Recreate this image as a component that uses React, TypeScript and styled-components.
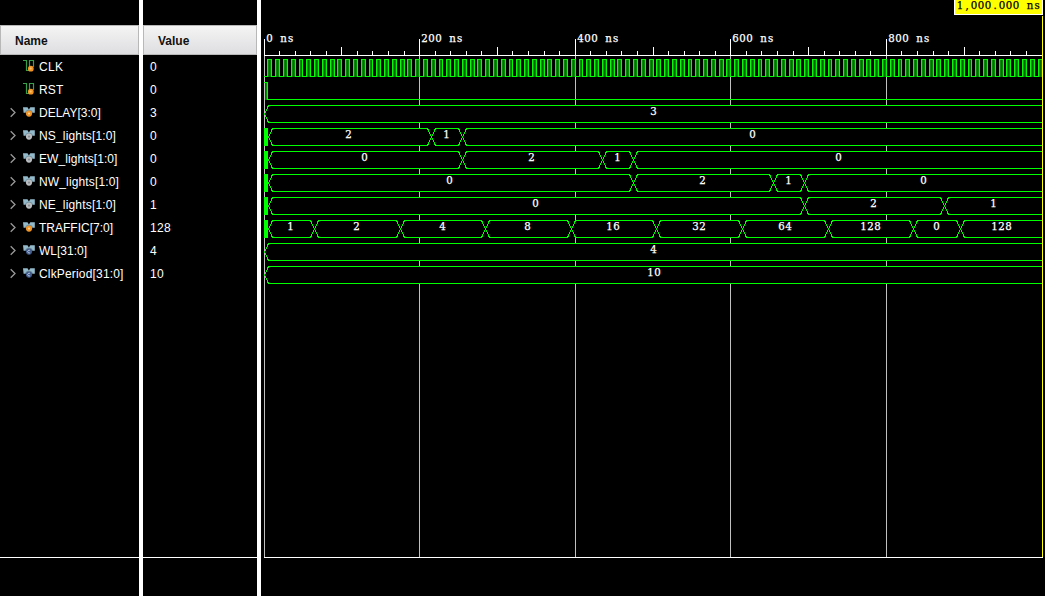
import React from "react";
import styled, { createGlobalStyle } from "styled-components";

const GlobalStyle = createGlobalStyle`
  html, body { margin: 0; background: #000; overflow: hidden; }
  * { box-sizing: border-box; }
`;

const Viewer = styled.div`
  display: flex;
  width: 1046px;
  height: 596px;
  background: #000;
  font-family: "Liberation Sans", Arial, sans-serif;
  font-size: 12px;
  color: #fff;
`;

const Column = styled.div<{ $width: number }>`
  display: flex;
  flex-direction: column;
  flex: none;
  width: ${(p) => p.$width}px;
  padding-top: 25px;
`;

const Divider = styled.div<{ $width: number }>`
  flex: none;
  width: ${(p) => p.$width}px;
  background: #fff;
`;

const ColumnHeader = styled.div`
  height: 30px;
  padding: 1px 0 0 14px;
  line-height: 28px;
  font-weight: bold;
  color: #111;
  border: 1px solid #b8b8b8;
  background: linear-gradient(#f4f4f4, #dedee1);
`;

const Rows = styled.div`
  height: 503px;
  border-bottom: 1px solid #fff;
`;

const NameRow = styled.div`
  display: flex;
  align-items: center;
  height: 23px;
  white-space: nowrap;
`;

const ValueRow = styled(NameRow)`
  padding-left: 7px;
`;

const Label = styled.span<{ $spacing?: number }>`
  height: 23px;
  line-height: 25px;
  letter-spacing: ${(p) => p.$spacing ?? 0}px;
`;

const Arrow = styled.svg`
  flex: none;
  width: 12px;
  height: 23px;
  margin-left: 8px;
  margin-right: 2px;
`;

const Glyph = styled.svg`
  flex: none;
  width: 17px;
  height: 23px;
`;

const WaveArea = styled.svg`
  flex: none;
  display: block;
  width: 784px;
  height: 596px;
  shape-rendering: crispEdges;
`;

const WaveText = styled.text`
  font-family: "DejaVu Serif", serif;
  font-size: 10.2px;
  text-anchor: middle;
  stroke-width: 0.25px;
  shape-rendering: auto;
`;

type Kind = "bit" | "bus";
type Signal = {
  name: string;
  value: string;
  kind: Kind;
  ball: string;
  spacing?: number;
  mark?: boolean;
  start?: number;
  edges?: number[];
  labels?: [string, number][];
};

const ORANGE = "#f09426";
const GREY = "#b9bdc0";
const NAVY = "#405989";
const GREEN = "#00ff00";

const signals: Signal[] = [
  { name: "CLK", value: "0", kind: "bit", ball: ORANGE, spacing: 0.3 },
  { name: "RST", value: "0", kind: "bit", ball: ORANGE, spacing: 0.15 },
  { name: "DELAY[3:0]", value: "3", kind: "bus", ball: ORANGE, start: 264, edges: [], labels: [["3", 653.5]] },
  { name: "NS_lights[1:0]", value: "0", kind: "bus", ball: GREY, spacing: 0.17, start: 268, edges: [431, 462], labels: [["2", 348.5], ["1", 446.5], ["0", 752.5]] },
  { name: "EW_lights[1:0]", value: "0", kind: "bus", ball: GREY, spacing: 0.08, start: 268, edges: [462, 602, 633], labels: [["0", 364.5], ["2", 531.5], ["1", 617.5], ["0", 838.5]] },
  { name: "NW_lights[1:0]", value: "0", kind: "bus", ball: GREY, spacing: 0.14, start: 268, edges: [633, 773, 804], labels: [["0", 449.5], ["2", 702.5], ["1", 788.5], ["0", 923.5]] },
  { name: "NE_lights[1:0]", value: "1", kind: "bus", ball: GREY, spacing: 0.17, start: 268, edges: [804, 944], labels: [["0", 535.5], ["2", 873.5], ["1", 993.5]] },
  {
    name: "TRAFFIC[7:0]", value: "128", kind: "bus", ball: ORANGE, start: 268,
    edges: [314, 400, 485, 571, 656, 742, 828, 913, 960],
    labels: [["1", 290.5], ["2", 356.5], ["4", 442.5], ["8", 527.5], ["16", 613], ["32", 699], ["64", 785], ["128", 870.5], ["0", 936.5], ["128", 1001.5]],
  },
  { name: "WL[31:0]", value: "4", kind: "bus", ball: NAVY, mark: true, start: 264, edges: [], labels: [["4", 653.5]] },
  { name: "ClkPeriod[31:0]", value: "10", kind: "bus", ball: NAVY, mark: true, spacing: 0.17, start: 264, edges: [], labels: [["10", 654]] },
];

const PX_PER_NS = 0.778;
const toX = (ns: number) => Math.floor(264 + ns * PX_PER_NS + 0.001);

const HLine = ({ from, to, y }: { from: number; to: number; y: number }) => (
  <rect x={from} y={y} width={to - from} height={1} fill={GREEN} />
);
const VLine = ({ x, y, h }: { x: number; y: number; h: number }) => (
  <rect x={x} y={y} width={1} height={h} fill={GREEN} />
);

/* Text set on a fixed 7px character grid, centred on cx. */
function GridText({ text, cx, y, fill = "#fff" }: { text: string; cx: number; y: number; fill?: string }) {
  const first = cx - ((text.length - 1) * 7) / 2;
  const xs = Array.from(text, (_, i) => first + i * 7).join(" ");
  return <WaveText x={xs} y={y} fill={fill} stroke={fill}>{text}</WaveText>;
}

function SignalIcon({ kind, ball, mark }: { kind: Kind; ball: string; mark?: boolean }) {
  if (kind === "bit") {
    return (
      <Glyph viewBox="0 0 17 23">
        <path d="M1 5.5h3.5v10H8M7.5 12V5.5h4V12" fill="none" stroke="#36a04b" strokeWidth="1.2" />
        <circle cx="8.8" cy="13.7" r="2.9" fill={ball} />
        <circle cx="8.6" cy="13.5" r="1.1" fill="#ffc470" />
      </Glyph>
    );
  }
  return (
    <Glyph viewBox="0 0 17 23">
      <path d="M1 6.3h4.5l1.4 2.2 1.4-2.2h4.5v5.5H1.6z" fill="#93bacb" />
      <circle cx="7" cy="12.6" r="3.9" fill="#000" fillOpacity="0.25" />
      <circle cx="7" cy="12.6" r="3.1" fill={ball} />
      {mark ? (
        <path d="M8.1 11.6a1.4 1.4 0 1 0 0 2" fill="none" stroke="#c2d0e8" strokeWidth="0.9" />
      ) : (
        <circle cx="7" cy="12.6" r="1.1" fill={ball === GREY ? "#888c90" : "#ffd090"} />
      )}
    </Glyph>
  );
}

function Ruler() {
  const majors = [0, 200, 400, 600, 800];
  return (
    <g>
      {majors.map((ns) => (
        <rect key={ns} x={toX(ns)} y={56} width={1} height={501} fill="#c0c0c0" />
      ))}
      <rect x={264} y={55} width={778} height={1} fill="#fff" />
      <rect x={264} y={557} width={779} height={1} fill="#fff" />
      {Array.from({ length: 50 }, (_, i) => {
        const ns = i * 20;
        const y = ns % 200 === 0 ? 39 : ns % 100 === 0 ? 47 : 51;
        return <rect key={ns} x={toX(ns)} y={y} width={1} height={55 - y} fill="#fff" />;
      })}
      {majors.map((ns) => {
        const s = `${ns} ns`;
        return <GridText key={ns} text={s} cx={toX(ns) + 2 + (s.length * 7) / 2} y={42} />;
      })}
    </g>
  );
}

function Clock() {
  return (
    <g>
      {Array.from({ length: 100 }, (_, i) => {
        const low = toX(i * 10);
        const a = toX(i * 10 + 5);
        const b = toX(i * 10 + 10);
        return (
          <g key={i}>
            <rect x={a + 1} y={60} width={b - a - 1} height={17} fill="#009000" />
            <rect x={a + 2} y={60} width={1} height={17} fill="#005c00" />
            <HLine from={low} to={a + 1} y={76} />
            <HLine from={a} to={b + 1} y={59} />
            <VLine x={a} y={59} h={18} />
            <VLine x={b} y={59} h={18} />
          </g>
        );
      })}
    </g>
  );
}

function Reset() {
  return (
    <g>
      <rect x={265} y={83} width={1} height={17} fill="#005c00" />
      <rect x={266} y={83} width={1} height={17} fill="#009000" />
      <HLine from={264} to={268} y={82} />
      <VLine x={267} y={82} h={18} />
      <HLine from={267} to={1042} y={99} />
    </g>
  );
}

function Bus({ s, row }: { s: Signal; row: number }) {
  const top = 59 + row * 23;
  const bot = top + 17;
  const mid = top + 9;
  const start = s.start!;
  const edges = s.edges!;
  const stops = [start, ...edges];
  const slants = [
    `M${start + 0.5} ${mid}L${start + 4.5} ${top + 0.5}M${start + 0.5} ${mid}L${start + 4.5} ${bot + 0.5}`,
    ...edges.map((e) => `M${e - 3.5} ${top + 0.5}L${e + 4.5} ${bot + 0.5}M${e - 3.5} ${bot + 0.5}L${e + 4.5} ${top + 0.5}`),
  ].join("");
  return (
    <g>
      <path d={`M${start} ${mid}L${start + 4} ${top}H1042V${bot + 1}H${start + 4}Z`} fill="#000" />
      {start === 268 && <rect x={264} y={top} width={4} height={18} fill={GREEN} />}
      <path d={slants} fill="none" stroke={GREEN} />
      {stops.map((from, i) => {
        const to = i < edges.length ? edges[i] - 3 : 1042;
        return (
          <g key={from}>
            <HLine from={from + 4} to={to} y={top} />
            <HLine from={from + 4} to={to} y={bot} />
          </g>
        );
      })}
      {s.labels!.map(([t, x]) => (
        <GridText key={x} text={t} cx={x} y={top + 10} />
      ))}
    </g>
  );
}

export default function App() {
  return (
    <>
      <GlobalStyle />
      <Viewer>
        <Column $width={139}>
          <ColumnHeader>Name</ColumnHeader>
          <Rows>
            {signals.map((s) => (
              <NameRow key={s.name}>
                <Arrow viewBox="0 0 12 23">
                  {s.kind === "bus" && <path d="M2.7 7.2L7 11.5L2.7 15.8" fill="none" stroke="#999" strokeWidth="1.3" />}
                </Arrow>
                <SignalIcon kind={s.kind} ball={s.ball} mark={s.mark} />
                <Label $spacing={s.spacing}>{s.name}</Label>
              </NameRow>
            ))}
          </Rows>
        </Column>
        <Divider $width={4} />
        <Column $width={114}>
          <ColumnHeader>Value</ColumnHeader>
          <Rows>
            {signals.map((s) => (
              <ValueRow key={s.name}>
                <Label $spacing={0.3}>{s.value}</Label>
              </ValueRow>
            ))}
          </Rows>
        </Column>
        <Divider $width={4} />
        <WaveArea viewBox="261 0 784 596">
          <Ruler />
          <Clock />
          <Reset />
          {signals.map((s, i) => (s.kind === "bus" ? <Bus key={s.name} s={s} row={i} /> : null))}
          <rect x={1042} y={16} width={1} height={541} fill="#ffff00" />
          <rect x={954} y={0} width={89} height={15} fill="#fff" />
          <rect x={955} y={0} width={87} height={14} fill="#ffff00" />
          <GridText text="1,000.000 ns" cx={998.5} y={8.5} fill="#000" />
        </WaveArea>
        <Divider $width={1} />
      </Viewer>
    </>
  );
}
